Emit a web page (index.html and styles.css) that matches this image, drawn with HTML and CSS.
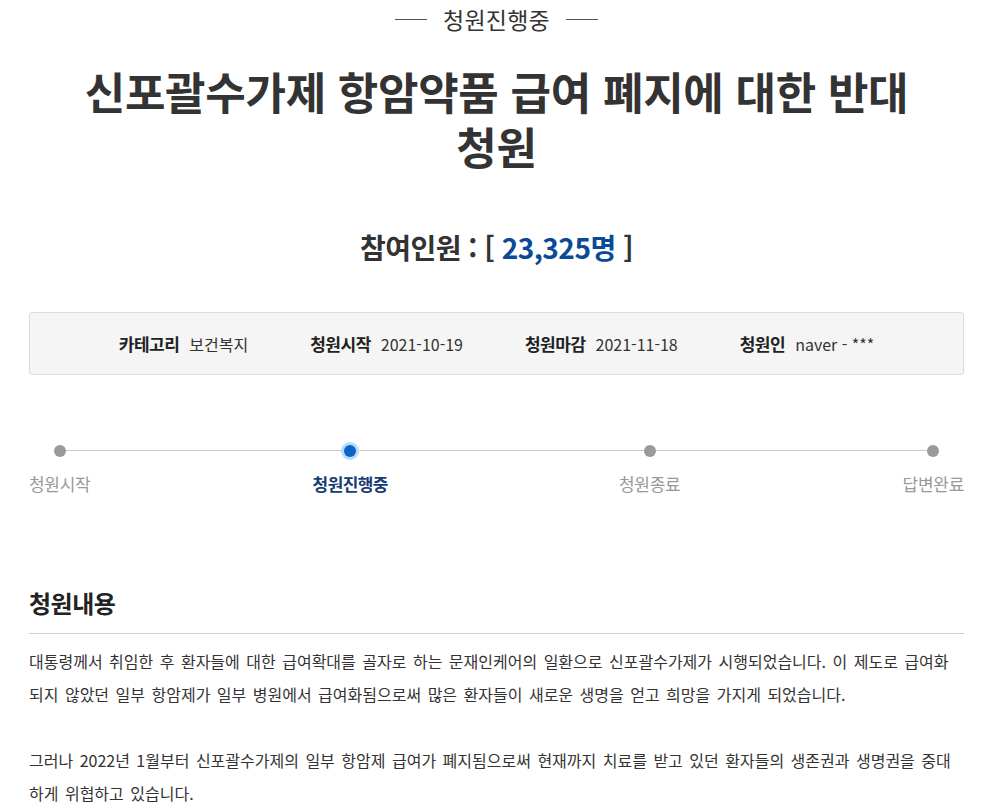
FILE: index.html
```html
<!DOCTYPE html>
<html lang="ko">
<head>
<meta charset="utf-8">
<link rel="stylesheet" href="styles.css">
</head>
<body>
<div class="wrap">
  <div class="status"><span class="dash"></span><span class="status-text">청원진행중</span><span class="dash"></span></div>
  <h1 class="title"><span class="title-line">신포괄수가제 항암약품 급여 폐지에 대한 반대</span><span class="title-line">청원</span></h1>
  <div class="count">참여인원 : [ <span class="num">23,325명</span> ]</div>
  <div class="info">
    <div class="item"><span class="label">카테고리</span><span class="value">보건복지</span></div>
    <div class="item"><span class="label">청원시작</span><span class="value">2021-10-19</span></div>
    <div class="item"><span class="label">청원마감</span><span class="value">2021-11-18</span></div>
    <div class="item"><span class="label">청원인</span><span class="value">naver - ***</span></div>
  </div>
  <div class="progress">
    <div class="track"></div>
    <div class="step"><span class="dot"></span><span class="step-label">청원시작</span></div>
    <div class="step active"><span class="dot"></span><span class="step-label">청원진행중</span></div>
    <div class="step"><span class="dot"></span><span class="step-label">청원종료</span></div>
    <div class="step"><span class="dot"></span><span class="step-label">답변완료</span></div>
  </div>
  <h2 class="section">청원내용</h2>
  <div class="content">
    <p>대통령께서 취임한 후 환자들에 대한 급여확대를 골자로 하는 문재인케어의 일환으로 신포괄수가제가 시행되었습니다. 이 제도로 급여화 되지 않았던 일부 항암제가 일부 병원에서 급여화됨으로써 많은 환자들이 새로운 생명을 얻고 희망을 가지게 되었습니다.</p>
    <p>그러나 2022년 1월부터 신포괄수가제의 일부 항암제 급여가 폐지됨으로써 현재까지 치료를 받고 있던 환자들의 생존권과 생명권을 중대하게 위협하고 있습니다.</p>
  </div>
</div>
</body>
</html>
```

FILE: styles.css
```css
* { box-sizing: border-box; }
html, body { margin: 0; padding: 0; background: #fff; }
body {
  font-family: "Noto Sans CJK KR", "Noto Sans", sans-serif;
  color: #333;
}
.wrap {
  width: 935px;
  margin-left: 29px;
}
.status {
  display: flex;
  justify-content: center;
  align-items: center;
  gap: 16px;
  height: 40px;
  padding-bottom: 2px;
}
.dash {
  width: 32px;
  height: 1px;
  background: #555;
}
.status-text {
  font-size: 23px;
  line-height: 1;
  letter-spacing: 0.2px;
  color: #333;
}
.title {
  margin: 24px 0 0;
  text-align: center;
  font-size: 44px;
  font-weight: 700;
  line-height: 55px;
  letter-spacing: -0.3px;
  color: #333;
}
.title-line { display: block; height: 55px; }
.count {
  margin-top: 53px;
  text-align: center;
  font-size: 28px;
  font-weight: 700;
  line-height: 40px;
  letter-spacing: -0.5px;
  color: #333;
}
.num { color: #0b4a98; }
.info {
  margin-top: 45px;
  height: 63px;
  border: 1px solid #dcdcdc;
  border-radius: 3px;
  background: #f5f5f5;
  display: flex;
  justify-content: center;
  align-items: center;
  gap: 62px;
}
.item { display: flex; align-items: center; gap: 10px; }
.label { font-size: 17px; font-weight: 700; letter-spacing: -0.5px; color: #222; }
.value { font-size: 16px; letter-spacing: 0; color: #333; }
.progress {
  position: relative;
  margin-top: 67px;
  display: flex;
  justify-content: space-between;
}
.track {
  position: absolute;
  left: 31px;
  right: 31px;
  top: 8px;
  height: 1px;
  background: #c8c8c8;
}
.step {
  position: relative;
  display: flex;
  flex-direction: column;
  align-items: center;
}
.step.active { margin-right: 9px; }
.dot {
  width: 12px;
  height: 12px;
  margin-top: 3px;
  border-radius: 50%;
  background: #9a9a9a;
}
.step.active .dot {
  background: #0b63c6;
  box-shadow: 0 0 0 3px #b9dbfb;
}
.step-label {
  margin-top: 15px;
  font-size: 17px;
  line-height: 24px;
  letter-spacing: -0.3px;
  color: #999;
}
.step.active .step-label { color: #173d72; font-weight: 700; letter-spacing: -0.6px; }
.section {
  margin: 90px 0 0;
  padding-bottom: 13px;
  border-bottom: 1px solid #cfcfcf;
  font-size: 24px;
  line-height: 34px;
  font-weight: 700;
  letter-spacing: -0.5px;
  color: #222;
}
.content { padding-top: 11px; }
.content p {
  margin: 0 0 33px;
  font-size: 16px;
  line-height: 33px;
  letter-spacing: 0;
  word-spacing: 2px;
  color: #333;
}
```
